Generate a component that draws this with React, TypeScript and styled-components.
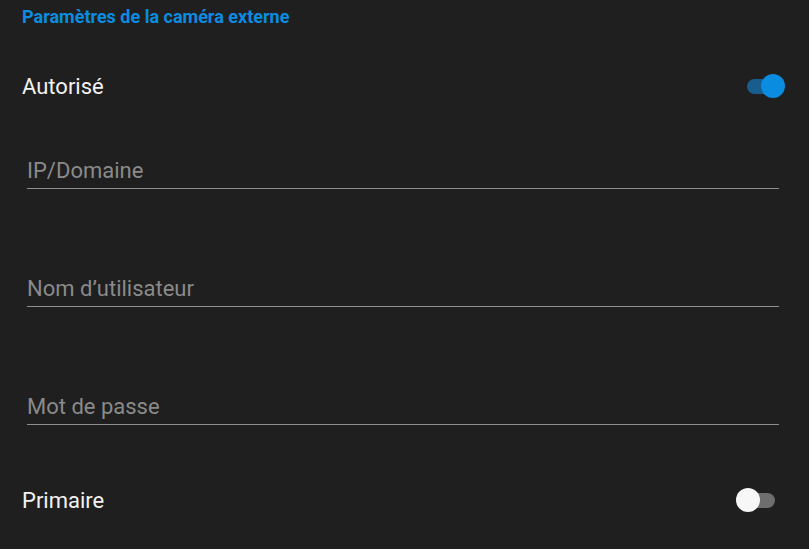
import React, { useState } from 'react'
import styled, { createGlobalStyle } from 'styled-components'

const GlobalStyle = createGlobalStyle`
  html, body {
    margin: 0;
    padding: 0;
    background: #1f1f1f;
    font-family: Roboto, "Liberation Sans", sans-serif;
  }
`

type SwitchProps = {
  checked: boolean,
  onChange: (v: boolean) => void
}

const Switch = ({checked, onChange}: SwitchProps) => (
  <SwitchBox onClick={() => onChange(!checked)} role="switch" aria-checked={checked}>
    <Track $on={checked} />
    <Thumb $on={checked} />
  </SwitchBox>
)

const App = () => {
  const [allowed, setAllowed] = useState(true)
  const [primary, setPrimary] = useState(false)
  const [host, setHost] = useState('')
  const [user, setUser] = useState('')
  const [pass, setPass] = useState('')

  return (
    <>
      <GlobalStyle />
      <Page>
        <Title>Paramètres de la caméra externe</Title>
        <SwitchRow>
          <Label>Autorisé</Label>
          <Switch checked={allowed} onChange={setAllowed} />
        </SwitchRow>
        <Fields>
          <Input placeholder="IP/Domaine" value={host} onChange={e => setHost(e.target.value)} />
          <Input placeholder="Nom d’utilisateur" value={user} onChange={e => setUser(e.target.value)} />
          <Input type="password" placeholder="Mot de passe" value={pass} onChange={e => setPass(e.target.value)} />
        </Fields>
        <SwitchRow $last>
          <Label>Primaire</Label>
          <Switch checked={primary} onChange={setPrimary} />
        </SwitchRow>
      </Page>
    </>
  )
}

const Page = styled.div`
  width: 809px;
  height: 549px;
  box-sizing: border-box;
  padding: 0 24px 0 22px;
  display: flex;
  flex-direction: column;
`

const Title = styled.div`
  color: #0a8ce0;
  font-weight: bold;
  font-size: 18px;
  height: 34px;
  line-height: 34px;
`

const SwitchRow = styled.div<{ $last?: boolean }>`
  display: flex;
  align-items: center;
  justify-content: space-between;
  height: 34px;
  margin-top: ${p => (p.$last ? '58px' : '35px')};
`

const Label = styled.div`
  color: #f2f2f2;
  font-size: 22px;
`

const SwitchBox = styled.div`
  position: relative;
  width: 50px;
  height: 26px;
  cursor: pointer;
`

const Track = styled.div<{ $on: boolean }>`
  position: absolute;
  left: 12px;
  top: 6px;
  width: 28px;
  height: 15px;
  border-radius: 8px;
  background: ${p => (p.$on ? '#175e8f' : '#6e6e6e')};
`

const Thumb = styled.div<{ $on: boolean }>`
  position: absolute;
  top: 1px;
  left: ${p => (p.$on ? '26px' : '1px')};
  width: 24px;
  height: 24px;
  border-radius: 50%;
  background: ${p => (p.$on ? '#0a8ce0' : '#f7f7f7')};
`

const Fields = styled.div`
  display: flex;
  flex-direction: column;
  gap: 82px;
  margin-top: 50px;
  padding-left: 5px;
`

const Input = styled.input`
  width: 752px;
  height: 36px;
  box-sizing: border-box;
  background: transparent;
  border: none;
  border-bottom: 1px solid #8f8f8f;
  outline: none;
  color: #f2f2f2;
  font-family: Roboto, "Liberation Sans", sans-serif;
  font-size: 22px;
  padding: 0;

  &::placeholder {
    color: #8a8a8a;
  }
`

export default App
